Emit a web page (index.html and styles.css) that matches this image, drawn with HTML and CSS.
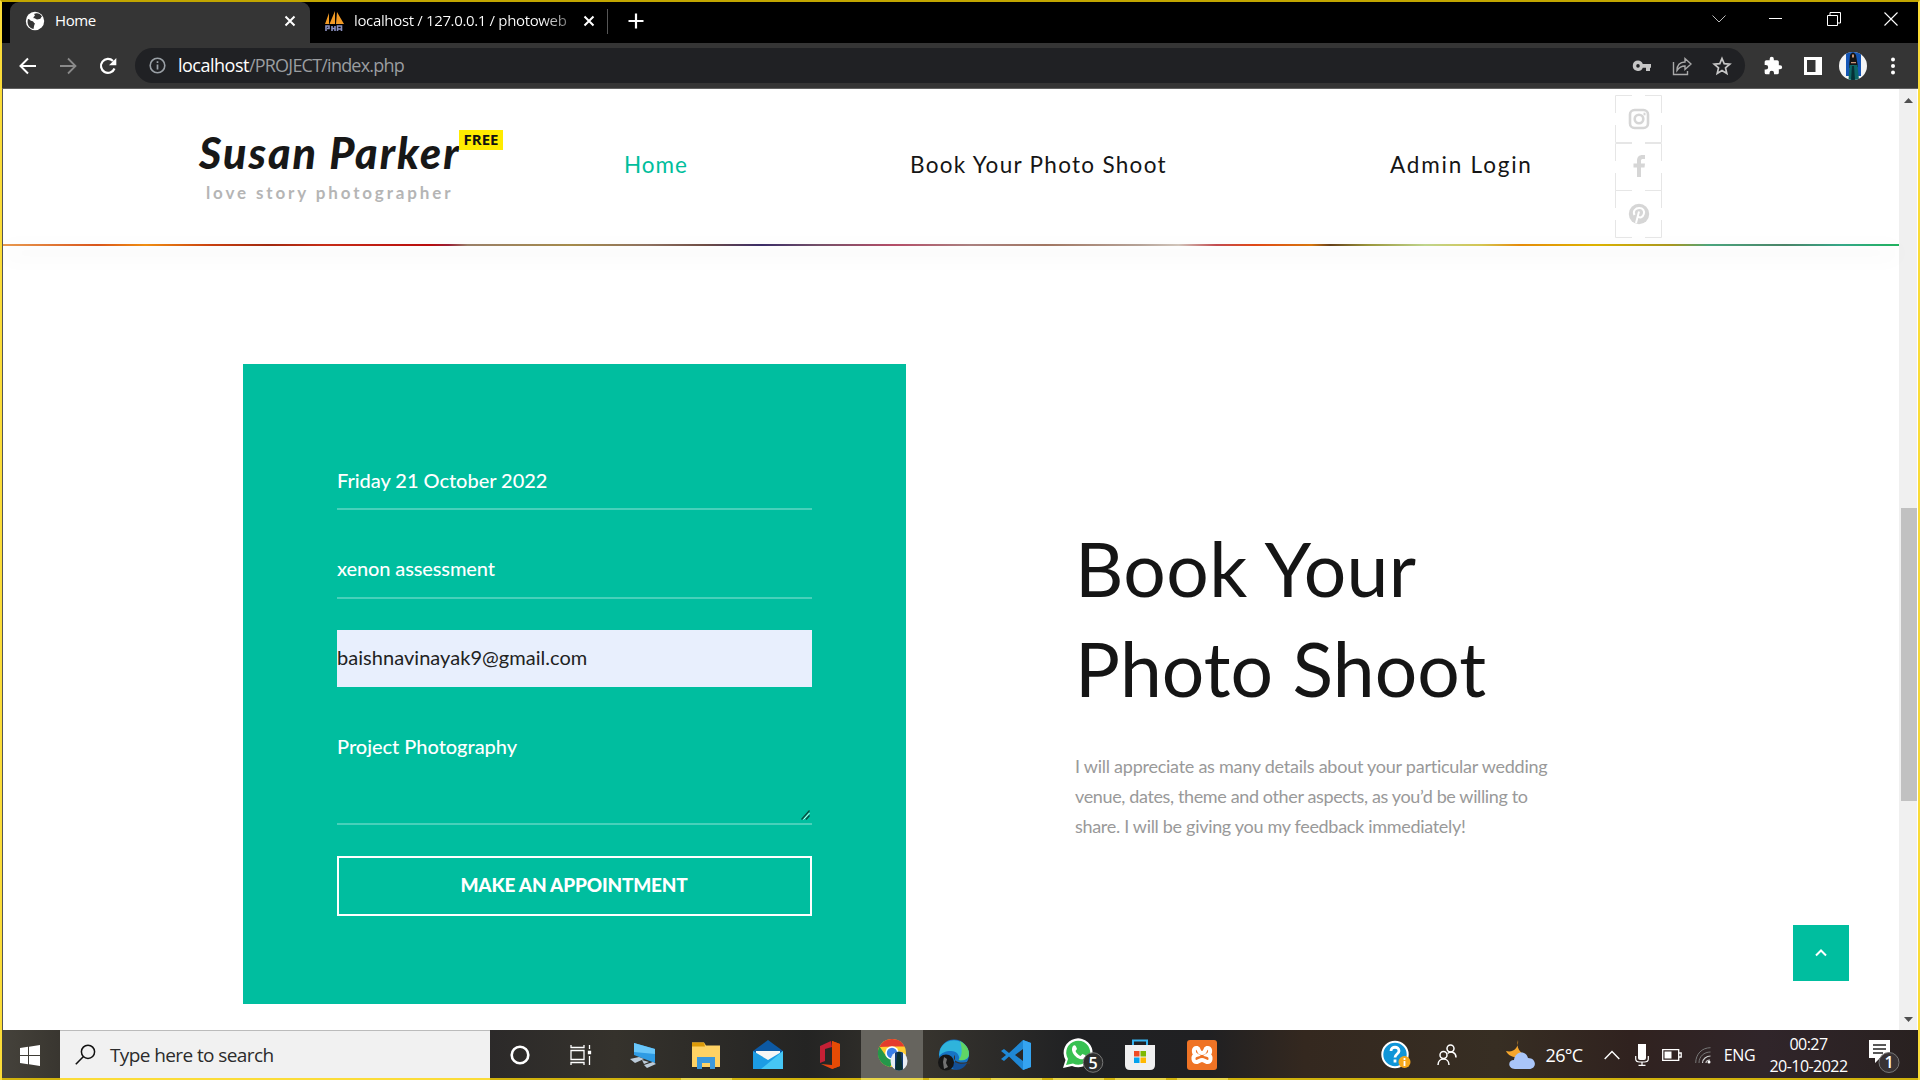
FILE: index.html
```html
<!DOCTYPE html>
<html lang="en">
<head>
<meta charset="utf-8">
<title>Home</title>
<link rel="stylesheet" href="styles.css">
</head>
<body>
<div class="screen">
  <div class="tabstrip">
    <div class="tab tab-active">
      <svg class="globe" width="20" height="20" viewBox="0 0 20 20"><circle cx="10" cy="10" r="9.2" fill="#fff"/><path d="M3 8c2 0 2 2 4 2 2 .5 1.500 2 3 2.500C9 14 9 16 8.500 18 4 17 1.500 13 3 8zM9 3c3-1.500 6-.5 8 2.500-1.500 1-1 2.500-2.500 2.500S12 9 11 8s-3 0-2.500-1.500S11 5 9 3z" fill="#353535"/></svg>
      <span class="tab-title">Home</span>
      <svg class="x" width="12" height="12" viewBox="0 0 12 12"><path d="M1.500 1.500l9 9M10.500 1.500l-9 9" stroke="#fff" stroke-width="2"/></svg>
    </div>
    <div class="tab tab-rest">
      <svg width="22" height="22" viewBox="0 0 22 22"><path d="M5 3v11H1zM11 1v13H5.500zM13 2l7 12h-8z" fill="#f29a24"/><path d="M2 21v-5h3v2.500H3M8 21v-5M8 18.500h3M11 16v5M13.500 21v-5h4v5M13.500 19h4" fill="none" stroke="#8a90c0" stroke-width="1.600"/></svg>
      <span class="tab-title second">localhost / 127.0.0.1 / photoweb</span>
      <svg class="x" width="12" height="12" viewBox="0 0 12 12"><path d="M1.500 1.500l9 9M10.500 1.500l-9 9" stroke="#fff" stroke-width="2"/></svg>
    </div>
    <svg class="plus" width="16" height="16" viewBox="0 0 16 16"><path d="M8 .5v15M.5 8h15" stroke="#fff" stroke-width="2.200"/></svg>
    <div class="winbtns">
      <svg width="14" height="14" viewBox="0 0 14 14"><path d="M.5 3.500L7 10l6.500-6.500" fill="none" stroke="#bbb"/></svg>
      <svg width="14" height="14" viewBox="0 0 14 14"><path d="M0 6.500h13" stroke="#fff"/></svg>
      <svg width="14" height="14" viewBox="0 0 14 14"><path d="M.5 3.500h10v10H.5zM3 3V.5h10.500V11H11" fill="none" stroke="#fff"/></svg>
      <svg width="14" height="14" viewBox="0 0 14 14"><path d="M.5.5l13 13M13.500.5l-13 13" stroke="#fff" stroke-width="1.100"/></svg>
    </div>
  </div>

  <div class="toolbar">
    <svg class="nav-ico" width="18" height="18" viewBox="0 0 18 18"><path d="M17 9H2M9 1.500L1.500 9 9 16.500" fill="none" stroke="#fff" stroke-width="2"/></svg>
    <svg class="nav-ico" width="18" height="18" viewBox="0 0 18 18"><path d="M1 9h15M9 1.500L16.500 9 9 16.500" fill="none" stroke="#8a8a8a" stroke-width="1.800"/></svg>
    <svg class="nav-ico" width="18" height="18" viewBox="0 0 18 18"><path d="M15.500 11.500A7 7 0 1 1 14 4" fill="none" stroke="#fff" stroke-width="2.200"/><path d="M17.300 1v7.300H10z" fill="#fff"/></svg>
    <div class="omnibox">
      <svg width="17" height="17" viewBox="0 0 17 17"><circle cx="8.500" cy="8.500" r="7.300" fill="none" stroke="#9aa0a6" stroke-width="1.600"/><path d="M8.500 7.500v5M8.500 4.200v1.800" stroke="#9aa0a6" stroke-width="1.700"/></svg>
      <span class="url"><b>localhost</b>/PROJECT/index.php</span>
      <span class="omni-right">
        <svg width="20" height="20" viewBox="0 0 20 20"><path d="M6 4.500a5.200 5.200 0 1 0 4.800 7.200H14V15h4v-3.300h1V8h-8.200A5.200 5.200 0 0 0 6 4.500zm0 3.600a1.800 1.800 0 1 1 0 3.600 1.800 1.800 0 0 1 0-3.600z" fill="#c6c6c6"/></svg>
        <svg width="20" height="20" viewBox="0 0 20 20"><path d="M1.500 6v12.500h14V15M5 14.500C5 9 8.500 6.200 13 6V2.500l6 5.500-6 5.500V10c-4 0-6 1.500-8 4.500z" fill="none" stroke="#a9a9a9" stroke-width="1.400"/></svg>
        <svg width="20" height="20" viewBox="0 0 20 20"><path d="M10 2.500l2.200 5.200 5.600.5-4.300 3.700 1.300 5.500-4.800-2.900-4.800 2.900 1.300-5.500-4.300-3.700 5.600-.5z" fill="none" stroke="#c6c6c6" stroke-width="1.700"/></svg>
      </span>
    </div>
    <div class="ext">
      <svg width="20" height="20" viewBox="0 0 24 24"><path d="M20.500 11H19V7a2 2 0 0 0-2-2h-4V3.500a2.500 2.500 0 0 0-5 0V5H4a2 2 0 0 0-2 2v3.800h1.500a2.700 2.700 0 0 1 0 5.400H2V20a2 2 0 0 0 2 2h3.800v-1.500a2.700 2.700 0 0 1 5.400 0V22H17a2 2 0 0 0 2-2v-4h1.500a2.500 2.500 0 0 0 0-5z" fill="#fff"/></svg>
      <svg width="18" height="18" viewBox="0 0 18 18"><path fill="#fff" fill-rule="evenodd" d="M0 0h18v18H0zM3 3v12h8.500V3z"/></svg>
      <svg width="28" height="28" viewBox="0 0 28 28"><clipPath id="av"><circle cx="14" cy="14" r="14"/></clipPath><g clip-path="url(#av)"><path fill="#f4f4f4" d="M0 0h28v28H0z"/><path fill="#1556b5" d="M7 0h15v24H7z"/><path fill="#141313" d="M11 3q3-5 6 0l2 12-9 1z"/><path fill="#0d6866" d="M10.500 13h8L20 28H9.500z"/><path fill="#c79578" d="M13 2.500h2v3h-2zM12 10h5v1.200h-5z"/><path fill="#062f36" d="M13 14h2l1 14h-4z"/></g></svg>
      <svg width="6" height="18" viewBox="0 0 6 18"><circle cx="3" cy="2.500" r="2" fill="#fff"/><circle cx="3" cy="9" r="2" fill="#fff"/><circle cx="3" cy="15.500" r="2" fill="#fff"/></svg>
    </div>
  </div>

  <div class="viewport">
    <div class="page">
      <header class="site-header">
        <div class="logo">
          <div class="logo-main"><span class="logo-name">Susan Parker</span><span class="free">FREE</span></div>
          <div class="logo-sub">love story photographer</div>
        </div>
        <nav class="menu">
          <a class="m1">Home</a><a class="m2">Book Your Photo Shoot</a><a class="m3">Admin Login</a>
        </nav>
        <div class="socials">
          <div class="soc"><svg class="frame" width="47" height="48"><path d="M.5 18V.5h16.500M30 .5h16.500V18M.5 30v17.500h16.500M30 47.500h16.500V30" fill="none" stroke="#e6e6e6"/></svg><svg width="22" height="22" viewBox="0 0 22 22" fill="none" stroke="#d6d6d6" stroke-width="2.600"><rect x="2" y="2" width="18" height="18" rx="4.500"/><circle cx="11" cy="11" r="4.300"/><path d="M15.500 6h2" /></svg></div>
          <div class="soc"><svg class="frame" width="47" height="48"><path d="M.5 18V.5h16.500M30 .5h16.500V18M.5 30v17.500h16.500M30 47.500h16.500V30" fill="none" stroke="#e6e6e6"/></svg><svg class="fb" width="22" height="22" viewBox="0 0 22 22"><path d="M9 22V12.500H5.500V8.500H9V6c0-4 2-6 5.500-6H17v4h-2c-1.500 0-2 .6-2 2v2.500h4l-.5 4H13V22z" fill="#d6d6d6"/></svg></div>
          <div class="soc"><svg class="frame" width="47" height="48"><path d="M.5 18V.5h16.500M30 .5h16.500V18M.5 30v17.500h16.500M30 47.500h16.500V30" fill="none" stroke="#e6e6e6"/></svg><svg width="22" height="22" viewBox="0 0 22 22"><circle cx="11" cy="11" r="10.200" fill="#d6d6d6"/><path d="M8 20l3-11.500M6.500 12C4.500 8 7.500 5 11.200 5c4 0 5.500 3 4.600 6-.8 3.300-4.300 4.500-5.800 2.200" fill="none" stroke="#fff" stroke-width="2"/></svg></div>
        </div>
      </header>
      <div class="ribbon"></div>
      <main class="booking">
        <form class="card">
          <div class="field line">Friday 21 October 2022</div>
          <div class="field line name">xenon assessment</div>
          <div class="field email">baishnavinayak9@gmail.com</div>
          <div class="field line message">Project Photography<svg class="grip" width="9" height="10"><path d="M.5 9.500l8-9M5 9.500l3.500-4" stroke="#0b4a3e" stroke-width="1.200"/><path d="M2.500 9.500l6-6.500" stroke="#d9fff6"/></svg></div>
          <div class="submit">MAKE AN APPOINTMENT</div>
        </form>
        <section class="copy">
          <h1><span class="h-a">Book Your</span><br><span class="h-b">Photo Shoot</span></h1>
          <p>I will appreciate as many details about your particular wedding<br><span class="l2">venue, dates, theme and other aspects, as you’d be willing to</span><br><span class="l3">share. I will be giving you my feedback immediately!</span></p>
        </section>
      </main>
      <div class="to-top"><svg width="12" height="8" viewBox="0 0 12 8"><path d="M1 6.500l5-5 5 5" fill="none" stroke="#fff" stroke-width="2"/></svg></div>
    </div>
    <div class="scrollbar">
      <svg width="9" height="5"><path d="M4.500 0L9 5H0z" fill="#505050"/></svg>
      <div class="thumb"></div>
      <svg width="9" height="5"><path d="M4.500 5L9 0H0z" fill="#505050"/></svg>
    </div>
  </div>

  <div class="taskbar">
    <div class="start"><svg width="20" height="21" viewBox="0 0 20 21"><path d="M0 3l8-1.200v8.200H0zM9 1.700L20 0v10H9zM0 11h8v8.200L0 18zM9 11h11v10L9 19.300z" fill="#fff"/></svg></div>
    <div class="search">
      <svg width="21" height="21" viewBox="0 0 21 21"><circle cx="13" cy="7.800" r="6.600" fill="none" stroke="#111" stroke-width="1.500"/><path d="M8.500 12.500L.8 20.200" stroke="#111" stroke-width="1.600"/></svg>
      <span class="search-text">Type here to search</span>
    </div>
    <div class="apps">
      <div class="app"><svg width="22" height="22"><circle cx="11" cy="11" r="8.300" fill="none" stroke="#fff" stroke-width="2.600"/></svg></div>
      <div class="app"><svg class="views" width="22" height="22" fill="none" stroke="#fff" stroke-width="1.300"><path d="M1 6.500h13v9H1zM1 1v2.500h13V1M1 21v-2.500h13V21M19.500 1v4M19.500 12v9"/><path d="M18.500 7.500h2v2h-2z" fill="#fff"/></svg></div>
      <div class="app"><svg width="30" height="30"><path d="M5 3l21 6v14L5 15z" fill="#2e9be4"/><path d="M5 3l21 6v5L5 12z" fill="#69c6fa"/><path d="M1 19l9-2 5 2-9 4zM15 25l9-3 3 2-9 4zM13 20l7 2-5 2" fill="#bccbd9"/></svg></div>
      <div class="app on"><svg width="28" height="28"><path d="M0 1.500h12l2 3h14V26H0z" fill="#ffd264"/><path d="M0 1.500h12l1 4H0z" fill="#dc9a08"/><path d="M5 28V16h18v12h-5v-6h-8v6z" fill="#3b98dc"/></svg></div>
      <div class="app"><svg width="30" height="30"><path d="M0 11L15 0l15 11v18H0z" fill="#0c59a4"/><path d="M3 11h24v8L15 24 3 17z" fill="#f5f5f5"/><path d="M0 11l15 9 15-9v18H0z" fill="#1c9ce4"/><path d="M30 11v18H8z" fill="#46c7f5"/></svg></div>
      <div class="app"><svg width="24" height="28"><path d="M13 0L2 5v17l5-2V8l7-2z" fill="#c52035"/><path d="M14 0l8 3v22l-8 3-11-5 11 1z" fill="#e84511"/><path d="M14 0l8 3v22l-8 3z" fill="#e64b05"/></svg></div>
      <div class="app on current"><svg class="chrome" width="34" height="34" viewBox="0 0 34 34"><clipPath id="cv"><ellipse cx="23" cy="23" rx="8.500" ry="9.500"/></clipPath><circle cx="16" cy="15" r="14" fill="#ffcd32"/><path d="M3.500 9A14 14 0 0 1 28.500 8.500H16z" fill="#e43b2d"/><path d="M3.500 8.500A14 14 0 0 0 14 29l5-9-9-2z" fill="#24974a"/><circle cx="16" cy="15" r="6.800" fill="#fff"/><circle cx="16" cy="15" r="5.200" fill="#3a7fe8"/><g clip-path="url(#cv)"><path d="M12 12h22v22H12z" fill="#e9eef5"/><path d="M19 12h8v21h-8z" fill="#123a70"/><path d="M21.500 14h3l2.500 20h-8z" fill="#0b302f"/></g></svg></div>
      <div class="app on"><svg width="32" height="32" viewBox="0 0 32 32"><circle cx="16" cy="15.500" r="15" fill="#1674c4"/><path d="M2 11A15 15 0 0 1 31 15c0 5-4 7-10 6 1-3-1-9-8-9-6 0-9 2-12 5z" fill="#2fb4dc"/><path d="M22 2c7 4 10 9 8.500 15-1 3-5 5-10 4 4-4 4-11 1.500-19z" fill="#60d565"/><path d="M17 16c-2 2-1 5 1 6 4 2 8 2 14 0v3H17z" fill="#37332e"/><path d="M14 20c2 4 9 6 15 4-2 4-6 7-11 7-5-1-6-8-4-11z" fill="#134f96"/><circle cx="8" cy="23.500" r="8" fill="#161616"/><path d="M6 18l3 2-1 4 2 4-4 2-1-7z" fill="#727272"/></svg></div>
      <div class="app on"><svg width="30" height="30"><path d="M22 0l8 3v24l-8 3L8 16.500 3 21l-3-2 5-4-5-4 3-2 5 4zM22 9l-8 6 8 6z" fill="#1f88d5" fill-rule="evenodd"/><path d="M22 0l8 3v24l-8 3z" fill="#35a4f0"/></svg></div>
      <div class="app on"><svg class="whats" width="42" height="36" viewBox="0 0 42 36"><path d="M1 31l2.500-8A14.500 14.500 0 1 1 10 29z" fill="#fff"/><path d="M4 28l2-6a12 12 0 1 1 5 4.500z" fill="#38c152"/><path d="M11 9c2-2 3 0 4 3l-1.500 2c1 2.500 3 4 5 5l2-2c3 1 5 2 3 4-5 5-17-5-12.500-12z" fill="#fff"/><circle cx="31" cy="25.500" r="9.800" fill="#2d2d2d" stroke="#777"/><text x="31" y="31.500" text-anchor="middle" class="badge-num">5</text></svg></div>
      <div class="app on"><svg width="30" height="32"><path d="M8 7V1.500h14V7" fill="none" stroke="#36b2ee" stroke-width="2"/><path d="M0 6h30v20q0 5-5 5H5q-5 0-5-5z" fill="#f0f0f0"/><path d="M9 12h5.500v5.500H9z" fill="#ef4b24"/><path d="M15.500 12H21v5.500h-5.500z" fill="#7fb900"/><path d="M9 18.500h5.500V24H9z" fill="#04a3ee"/><path d="M15.500 18.500H21V24h-5.500z" fill="#ffb800"/></svg></div>
      <div class="app on"><svg width="30" height="30"><rect width="30" height="30" rx="3" fill="#ef7325"/><path d="M10 8c-4-1-4 5-1 7-4 1-3 8 1 7 3-1 3-2 5-2s2 1 5 2c4 1 5-6 1-7 3-2 3-8-1-7-3 1-1 5-5 5s-2-4-5-5z" fill="none" stroke="#fff" stroke-width="4"/></svg></div>
    </div>
    <div class="tray">
      <div class="t52"><svg width="30" height="30"><circle cx="14" cy="14.500" r="12.700" fill="#1095d7" stroke="#fff" stroke-width="2"/><path d="M10 11c0-5 8-5 8 0 0 3-4 3-4 6.500M14 19.500v3" fill="none" stroke="#fff" stroke-width="2.800"/><circle cx="23.500" cy="22" r="6" fill="#f5a81c"/><path d="M23.500 21v5M23.500 18v2" stroke="#fff" stroke-width="1.800"/></svg></div>
      <div class="t52"><svg width="20" height="22" fill="none" stroke="#fff" stroke-width="1.500"><circle cx="6.500" cy="11" r="3.500"/><circle cx="13.500" cy="4.500" r="3.500"/><path d="M1 21c0-8 11-8 11 0M10.500 9.500c4-3 8.500-1 8.500 4"/></svg></div>
      <div class="weather"><svg width="30" height="30"><path d="M12 0c-2 8 2 13 8 15-6 4-17 3-20-4 8 2 13-4 12-11z" fill="#f5a62c"/><path d="M9 29c-8-1-7-9-1-9 1-9 12-10 14-2 9 0 9 11 1 11z" fill="#a9c5f8"/></svg><span class="temp">26°C</span></div>
      <div class="t30"><svg width="16" height="10"><path d="M.7 9L8 1.500 15.300 9" fill="none" stroke="#fff" stroke-width="1.400"/></svg></div>
      <div class="t30"><svg width="14" height="22"><path d="M3 0h8v14q0 2-2 2H5q-2 0-2-2z" fill="#fff"/><path d="M.7 12v3q0 3 4 3h4.600q4 0 4-3v-3M7 18v3.500M3.500 21.400h7" fill="none" stroke="#fff" stroke-width="1.200"/></svg></div>
      <div class="t30"><svg width="20" height="12"><path d="M.7.7h16v10.600H.7zM17 4h2.200v4H17" fill="none" stroke="#fff" stroke-width="1.300"/><path d="M2.500 2.500h7v7h-7z" fill="#fff"/></svg></div>
      <div class="t32"><svg width="16" height="17" fill="none"><path d="M.7 16C.7 7 7 .7 15.500.7M4 16C4 9.500 9 5 15.500 5" stroke="#777"/><path d="M7.500 16c0-4 4-7 8-7M11 16c0-2 2-3 4-3" stroke="#ccc" stroke-width="1.200"/><circle cx="14" cy="15" r="1.500" fill="#fff"/></svg></div>
      <div class="eng"><span>ENG</span></div>
      <div class="clock"><span class="time">00:27</span><span class="date">20-10-2022</span></div>
      <div class="notes"><svg width="32" height="36" viewBox="0 0 32 36"><path d="M0 3h21v18H11l-5 5v-5H0z" fill="#fff"/><path d="M4 8h13M4 12h13M4 16h10" stroke="#222" stroke-width="1.300"/><circle cx="20" cy="25.500" r="10" fill="#393335" stroke="#777"/><text x="20" y="31" text-anchor="middle" class="badge-num">1</text></svg></div>
    </div>
  </div>
</div>
</body>
</html>
```
FILE: styles.css
```css
* { box-sizing: border-box; }
body { margin: 0; overflow: hidden; font-family: Lato, sans-serif; }
svg { display: block; flex: none; }
.screen {
  width: 1920px; height: 1080px; overflow: hidden;
  display: flex; flex-direction: column;
  border: 2px solid #fbdc38; border-top-color: #c2a600;
  border-bottom: 0; background: #fff;
}

/* browser tabs */
.tabstrip { height: 41px; flex: none; background: #000; display: flex; align-items: stretch; padding-left: 8px; font-family: "Open Sans", "Noto Sans", sans-serif; }
.tab { display: flex; align-items: center; color: #fff; padding-bottom: 3px; }
.tab-active { width: 300px; background: #353535; border-radius: 9px 9px 0 0; padding-left: 15px; padding-right: 14px; }
.tab-active .x, .tab-rest .x { margin-left: auto; }
.tab-title { font-size: 15px; margin-left: 10px; padding-bottom: 2px; letter-spacing: -0.4px; white-space: nowrap; }
.tab-rest { width: 298px; padding-left: 14px; padding-right: 13px; background: linear-gradient(#555, #555) 100% 7px / 1px 25px no-repeat; }
.tab-title.second { margin-left: 8px; letter-spacing: -0.35px; background: linear-gradient(90deg, #fff 88%, #777); -webkit-background-clip: text; background-clip: text; color: transparent; }
.plus { align-self: center; margin: 0 0 3px 20px; }
.winbtns { margin-left: auto; display: flex; gap: 43.500px; padding: 10px 20px 0 0; }

/* address bar */
.toolbar { height: 46px; flex: none; background: #353535; border-bottom: 1px solid #606060; display: flex; align-items: center; padding-left: 17px; }
.nav-ico { margin-right: 22px; }
.omnibox { width: 1610px; height: 35px; border-radius: 18px; background: #202124; display: flex; align-items: center; padding-left: 14px; margin-left: -4px; }
.url { font-family: "Open Sans", "Noto Sans", sans-serif; font-size: 18px; color: #9a9da0; margin-left: 12px; padding-bottom: 1px; letter-spacing: -0.780px; }
.url b { font-weight: 400; color: #fff; letter-spacing: -0.500px; }
.omni-right { margin-left: auto; display: flex; gap: 20px; padding-right: 13px; }
.ext { display: flex; align-items: center; margin-left: 18px; gap: 21px; }
.ext svg:nth-child(3) { margin-left: -4px; }
.ext svg:nth-child(4) { margin-left: 2px; }

/* page area */
.viewport { height: 941px; flex: none; display: flex; border-left: 1px solid #555; }
.page { width: 1896px; flex: none; position: relative; background: #fff; display: flex; flex-direction: column; }
.site-header { height: 155px; flex: none; display: flex; padding-left: 196px; }
.logo { width: 424px; padding-top: 38px; }
.logo-main { display: flex; align-items: flex-start; height: 50px; }
.logo-name { width: 260px; font: italic 900 43px/52px Lato, sans-serif; letter-spacing: 2px; color: #171717; white-space: nowrap; }
.free { width: 44px; height: 20px; margin-top: 3px; background: #ffeb00; color: #111; font: 700 15px/19px "Open Sans", sans-serif; text-align: center; letter-spacing: 0; }
.logo-sub { font-size: 17px; line-height: 20px; font-weight: 700; color: #b5b5b5; letter-spacing: 2.870px; padding: 6px 0 0 7px; white-space: nowrap; }
.menu { width: 992px; padding-top: 60px; display: flex; font-size: 22.500px; line-height: 32px; color: #151515; white-space: nowrap; }
.menu a { letter-spacing: 1.800px; }
.menu .m1 { width: 286px; color: #00be9c; padding-left: 1px; letter-spacing: 1px; }
.menu .m2 { width: 481px; padding-left: 1px; letter-spacing: 1.300px; }
.socials { padding-top: 6px; }
.soc { width: 47px; height: 48px; margin-bottom: -0.500px; position: relative; display: flex; align-items: center; justify-content: center; }
.fb { margin-bottom: 2px; }
.frame { position: absolute; left: 0; top: 0; }
.ribbon {
  height: 2px; flex: none; box-shadow: 0 8px 22px rgba(0,0,0,.16);
  background: linear-gradient(90deg, #e89a50 0, #d9561c 5%, #f08e12 7.500%, #c94010 11%, #a12a10 14%, #c72d18 17%, #b90d0d 22.500%, #9a2035 23.500%, #9a8068 24.500%, #a58b4b 30%, #8e7160 34%, #6f4d45 37%, #3b2d68 40%, #745069 43%, #b54d68 47%, #aa8180 51%, #a17662 55%, #b6a398 60%, #d1c5bb 62%, #c34c50 64%, #e04818 66%, #d8760e 69%, #65401a 70%, #9a963c 72%, #c0d58d 75%, #d4c552 78%, #e58c0b 80%, #ddb300 84%, #a89720 88%, #4aa57e 90%, #4a8468 94%, #35a888 97%, #20b25e 100%);
}
.booking { display: flex; padding: 118px 0 0 240px; }
.card { width: 663px; height: 640px; background: #00be9f; padding: 88px 94px 0 94px; }
.field { font-size: 20px; line-height: 24px; color: #fff; height: 58px; padding-top: 16px; margin-bottom: 31px; white-space: nowrap; }
.line { border-bottom: 2px solid #48d0ba; }
.card .field { letter-spacing: -0.030px; font-weight: 500; }
.card .name { padding-top: 15px; letter-spacing: -0.120px; }
.email { background: #e8effd; color: #222; height: 57px; padding-top: 15px; margin-bottom: 31px; }
.card .email { font-weight: 400; letter-spacing: 0.040px; }
.message { height: 107px; margin-bottom: 31px; position: relative; }
.grip { position: absolute; right: 2px; bottom: 3px; }
.submit { height: 60px; border: 2px solid #fff; color: #fff; text-align: center; font-weight: 900; font-size: 19px; line-height: 54px; letter-spacing: -0.200px; padding-right: 1px; }
.copy { padding: 154px 0 0 169px; color: #999; }
.copy h1 { margin: 0; font-size: 75px; line-height: 100px; font-weight: 400; color: #151515; white-space: nowrap; }
.h-a { letter-spacing: 0.450px; }
.h-b { letter-spacing: 0.100px; }
.copy p { margin: 33px 0 0; font-size: 18px; line-height: 30px; letter-spacing: -0.250px; white-space: nowrap; }
.l2 { letter-spacing: -0.370px; }
.l3 { letter-spacing: -0.310px; }
.to-top { position: absolute; left: 1790px; top: 836px; width: 56px; height: 56px; background: #00be9f; display: flex; align-items: center; justify-content: center; }
.scrollbar { width: 18px; background: #f0f0f0; display: flex; flex-direction: column; align-items: center; padding: 9px 0 8px; }
.thumb { width: 16px; height: 293px; background: #c1c1c1; margin: 405px 0 auto 1px; }

/* desktop taskbar */
.taskbar { flex: 1; display: flex; min-height: 0; color: #fff; font-family: "Open Sans", "Noto Sans", sans-serif; background: linear-gradient(#d0b20c, #d0b20c) bottom / 100% 2px no-repeat, linear-gradient(90deg, #45423b 0, #393630 3%, #2b2929 25%, #35322c 32%, #242423 42%, #37342e 48%, #202123 56%, #202022 63%, #34281f 68%, #372e23 78%, #30221f 85%, #30252a 92%, #292120 100%); }
.start { width: 58px; padding: 15px 0 0 18px; }
.search { width: 430px; background: #f1f1f1; border-top: 1px solid #bbb; border-bottom: 2px solid #fbdc38; color: #2b2b2b; display: flex; align-items: center; padding: 0 0 0 15px; }
.search-text { margin-left: 14px; font-size: 19px; letter-spacing: -0.600px; }
.apps { display: flex; margin-left: -1px; }
.app { width: 62px; display: flex; align-items: center; justify-content: center; padding: 2px 0; }
.views { margin-right: 2px; }
.chrome { margin-left: 2px; }
.whats { margin-left: 10px; }
.on { background: linear-gradient(#e8d548, #e8d548) center bottom / 51px 2px no-repeat; }
.current { background-color: #66645e; background-size: 100% 2px; }
.tray { margin-left: auto; display: flex; font-size: 17px; letter-spacing: -0.300px; }
.tray > div { display: flex; align-items: center; justify-content: center; padding-top: 2px; padding-bottom: 2px; }
.t52 { width: 52px; }
.tray .t52:first-child { padding-left: 2px; }
.tray .weather { width: 124px; padding-left: 18px; gap: 10px; }
.temp { font-size: 18px; letter-spacing: -0.700px; }
.t30 { width: 30px; }
.t32 { width: 32px; }
.eng { width: 41px; font-size: 16px; }
.tray .clock { width: 97px; flex-direction: column; font-size: 16px; line-height: 22px; padding-top: 1px; letter-spacing: -0.550px; }
.tray .notes { width: 61px; padding-right: 6px; }
.badge-num { font-family: "Open Sans", sans-serif; font-size: 16px; font-weight: 600; fill: #fff; }
```
